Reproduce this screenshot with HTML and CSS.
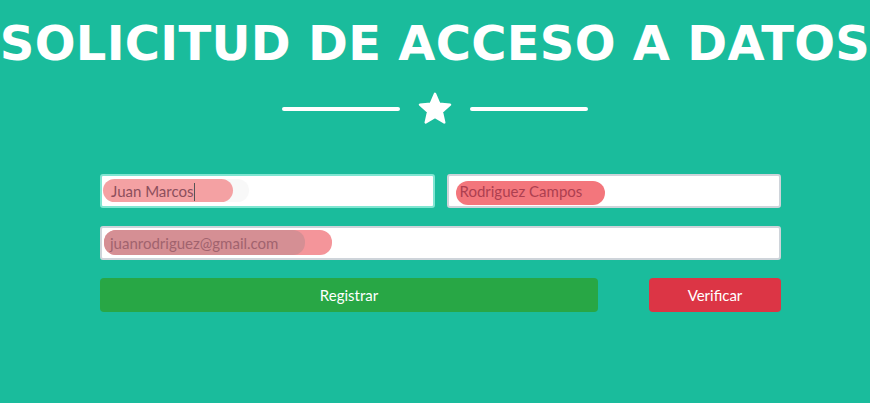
FILE: index.html
```html
<!DOCTYPE html>
<html lang="es">
<head>
<meta charset="utf-8">
<title>Solicitud de acceso a datos</title>
<link rel="stylesheet" href="styles.css">
</head>
<body>
<header class="masthead">
  <h1 class="title">SOLICITUD DE ACCESO A DATOS</h1>
  <div class="divider">
    <span class="line"></span>
    <svg class="star" width="36" height="34" viewBox="0 0 24 23" aria-hidden="true">
      <path d="M12 1.2 L14.9 7.9 L22.2 8.6 L16.7 13.5 L18.3 20.6 L12 16.9 L5.7 20.6 L7.3 13.5 L1.8 8.6 L9.1 7.9 Z" fill="#fff" stroke="#fff" stroke-width="1.6" stroke-linejoin="round"/>
    </svg>
    <span class="line"></span>
  </div>
</header>
<main class="form">
  <div class="row two">
    <div class="field focus">
      <span class="glow glow-name"></span>
      <span class="hl hl-name"></span>
      <span class="text text-name">Juan Marcos<span class="caret"></span></span>
    </div>
    <div class="field">
      <span class="hl hl-last"></span>
      <span class="text text-last">Rodriguez Campos</span>
    </div>
  </div>
  <div class="row">
    <div class="field wide">
      <span class="hl hl-mail-a"></span>
      <span class="hl hl-mail-b"></span>
      <span class="text text-mail">juanrodriguez@gmail.com</span>
    </div>
  </div>
  <div class="row buttons">
    <button class="btn btn-green">Registrar</button>
    <button class="btn btn-red">Verificar</button>
  </div>
</main>
</body>
</html>
```
FILE: styles.css
```css
html, body {
  margin: 0;
  padding: 0;
}
body {
  background: #1abc9c;
  width: 870px;
  height: 403px;
  overflow: hidden;
  font-family: Lato, "Liberation Sans", sans-serif;
}
.masthead {
  display: flex;
  flex-direction: column;
  align-items: center;
}
.title {
  margin: 17px 0 0 0;
  color: #fff;
  font-family: "DejaVu Sans", sans-serif;
  font-weight: 700;
  font-size: 48px;
  line-height: 52px;
  white-space: nowrap;
  letter-spacing: 0.3px;
}
.divider {
  display: flex;
  align-items: center;
  gap: 17px;
  margin-top: 23px;
}
.line {
  display: block;
  width: 118px;
  height: 4px;
  border-radius: 2px;
  background: #fff;
}
.star {
  display: block;
}
.form {
  margin: 48px 89px 0 100px;
  display: flex;
  flex-direction: column;
}
.row {
  display: flex;
  gap: 12px;
}
.row + .row {
  margin-top: 18px;
}
.field {
  position: relative;
  flex: 1;
  height: 34px;
  box-sizing: border-box;
  background: #fff;
  border: 2px solid #ced4da;
  border-radius: 3px;
}
.field.focus {
  border-color: #80e6d2;
}
.hl {
  position: absolute;
  border-radius: 12px;
}
.glow {
  position: absolute;
  left: 1px;
  top: 3px;
  width: 146px;
  height: 23px;
  border-radius: 12px;
  background: #f8f8f8;
}
.hl-name {
  left: 1px;
  top: 3px;
  width: 130px;
  height: 23px;
  background: #f4a1a3;
}
.hl-last {
  left: 7px;
  top: 5px;
  width: 149px;
  height: 24px;
  background: #f3767c;
}
.hl-mail-a {
  left: 2px;
  top: 2px;
  width: 228px;
  height: 25px;
  background: #f4959a;
}
.hl-mail-b {
  left: 2px;
  top: 2px;
  width: 201px;
  height: 25px;
  background: #d58f94;
}
.text {
  position: absolute;
  top: 0;
  height: 30px;
  line-height: 30px;
  font-size: 15px;
  white-space: nowrap;
}
.text-name {
  left: 9px;
  color: #8c4f5c;
}
.caret {
  display: inline-block;
  width: 1px;
  height: 18px;
  background: #555;
  vertical-align: -4px;
}
.text-last {
  left: 11px;
  color: #ad3f50;
}
.text-mail {
  left: 8px;
  color: #a1636e;
}
.buttons {
  gap: 51px;
}
.btn {
  height: 34px;
  border: none;
  border-radius: 4px;
  color: #fff;
  font-family: Lato, "Liberation Sans", sans-serif;
  font-size: 15px;
  padding: 0;
}
.btn-green {
  width: 498px;
  background: #28a745;
}
.btn-red {
  width: 132px;
  background: #dc3545;
}
```
